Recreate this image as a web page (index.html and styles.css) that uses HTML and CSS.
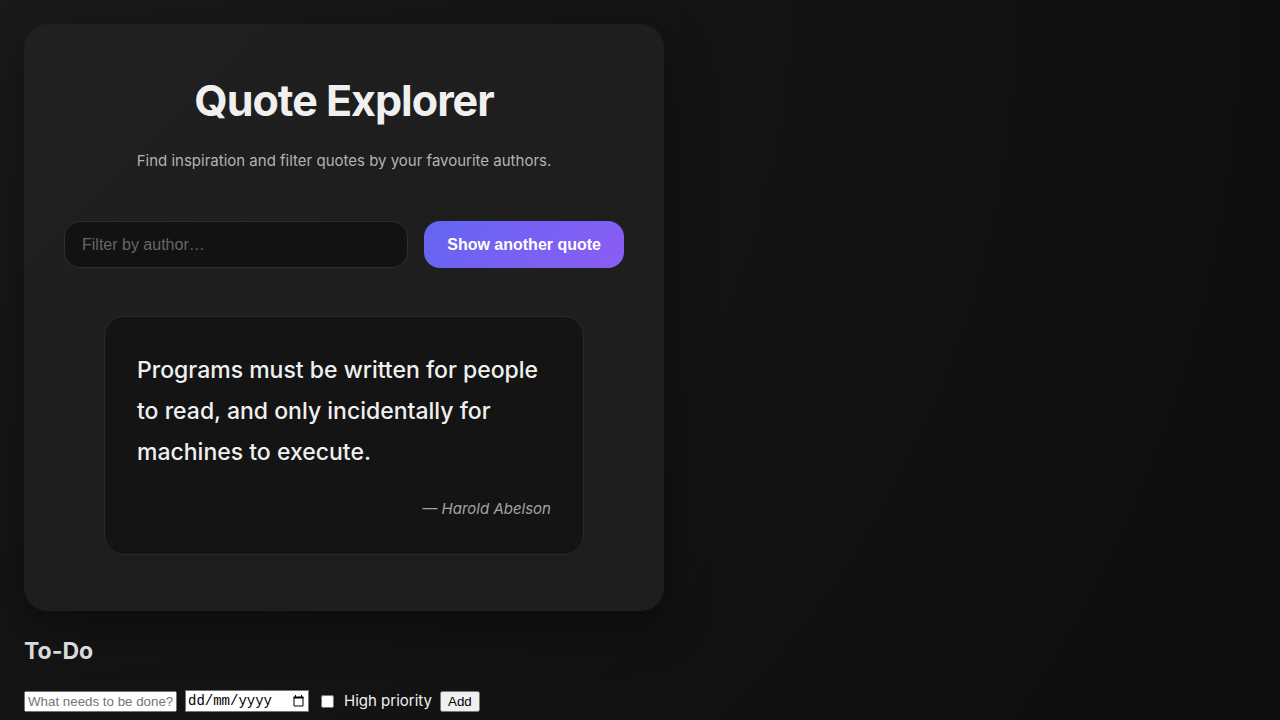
FILE: index.html
```html
<!DOCTYPE html>
<html lang="en-GB">
<head>
<meta charset="utf-8">
<meta name="viewport" content="width=device-width, initial-scale=1">
<title>Quote Explorer</title>
<link rel="stylesheet" href="styles.css">
</head>
<body>
<main class="card">
  <header class="header">
    <h1 class="title">Quote Explorer</h1>
    <p class="subtitle">Find inspiration and filter quotes by your favourite authors.</p>
  </header>
  <div class="controls">
    <input class="filter" type="text" placeholder="Filter by author…" aria-label="Filter by author">
    <button class="next" type="button">Show another quote</button>
  </div>
  <figure class="quote">
    <blockquote class="quote-text">Programs must be written for people to read, and only incidentally for machines to execute.</blockquote>
    <figcaption class="quote-author">— Harold Abelson</figcaption>
  </figure>
</main>
<section class="todo">
  <h2 class="todo-title">To-Do</h2>
  <form class="todo-form">
    <input class="todo-text" type="text" placeholder="What needs to be done?" aria-label="What needs to be done?">
    <div class="date-field">
      <input class="date-input" type="text" placeholder="dd/mm/yyyy" aria-label="Due date">
      <button class="date-picker" type="button" aria-label="Show date picker">
        <svg width="11" height="12" viewBox="0 0 11 12" fill="none" stroke="#000"><path d="M1 2.5h9v8.5H1z"/><path d="M.5 2.5h10" stroke-width="2"/><path d="M2.500 0v2M8.500 0v2"/></svg>
      </button>
    </div>
    <label class="priority"><input class="priority-box" type="checkbox"> High priority</label>
    <button class="add" type="button">Add</button>
  </form>
</section>
</body>
</html>
```

FILE: styles.css
```css
* { box-sizing: border-box; }
body {
  margin: 0;
  min-height: 100vh;
  padding: 24px;
  background: radial-gradient(circle at top left, #1a1a1a, #0d0d0d) fixed;
  color: #f0f0f0;
  font-family: Inter, sans-serif;
  font-size: 15px;
  line-height: 26px;
}
.card {
  max-width: 640px;
  padding: 40px 40px 56px;
  border-radius: 24px;
  background: linear-gradient(135deg, #202020, #1e1e1e 40%);
  box-shadow: 0 16px 48px rgba(0, 0, 0, 0.4);
}
.header { text-align: center; }
.title {
  margin: 0 0 12px;
  font-size: 43px;
  font-weight: 700;
  line-height: 72px;
  letter-spacing: -1px;
}
.subtitle { margin: 0; color: #b3b3b3; }
.controls { display: flex; gap: 16px; margin-top: 47px; }
.filter {
  flex: 1;
  min-width: 0;
  padding: 14px 17px;
  border: 1px solid #2e2e2e;
  border-radius: 16px;
  background: #121212;
  color: #f0f0f0;
  font: 16px/17px "Liberation Sans", sans-serif;
}
.filter::placeholder { color: #666; }
.next {
  padding: 14px 23px;
  border: 0;
  border-radius: 16px;
  background: linear-gradient(135deg, #6366f1, #8b5cf6);
  color: #fff;
  font: bold 16px/19px "Liberation Sans", sans-serif;
}
.quote {
  margin: 48px 40px 0;
  padding: 33px 32px 32px;
  border: 1px solid #292929;
  border-radius: 20px;
  background: #141414;
}
.quote-text { margin: 0; font-size: 23px; font-weight: 500; line-height: 41px; }
.quote-author { margin-top: 23px; color: #a3a3a3; font-style: italic; text-align: right; }
.todo-title { margin: 20px 0 17px; color: #dadada; font-size: 23px; line-height: 40px; }
.todo-form { display: flex; align-items: center; gap: 8px; }
.todo-text { width: 153px; height: 21px; padding: 1px 2px; }
.date-field {
  display: flex;
  align-items: center;
  width: 124px;
  height: 22px;
  padding: 0 4px 0 2px;
  border: 1px solid #767676;
  background: #fff;
}
.date-input {
  flex: 1;
  min-width: 0;
  padding: 0;
  border: 0;
  background: transparent;
  color: #000;
  font: 14px "Liberation Mono", monospace;
}
.date-input::placeholder { color: #000; }
.date-picker { display: flex; padding: 0; border: 0; background: none; }
.add { width: 40px; height: 21px; padding: 0; }
.priority { display: flex; align-items: center; gap: 10px; }
.priority-box { width: 13px; height: 13px; margin: 0 0 0 4px; }
```
